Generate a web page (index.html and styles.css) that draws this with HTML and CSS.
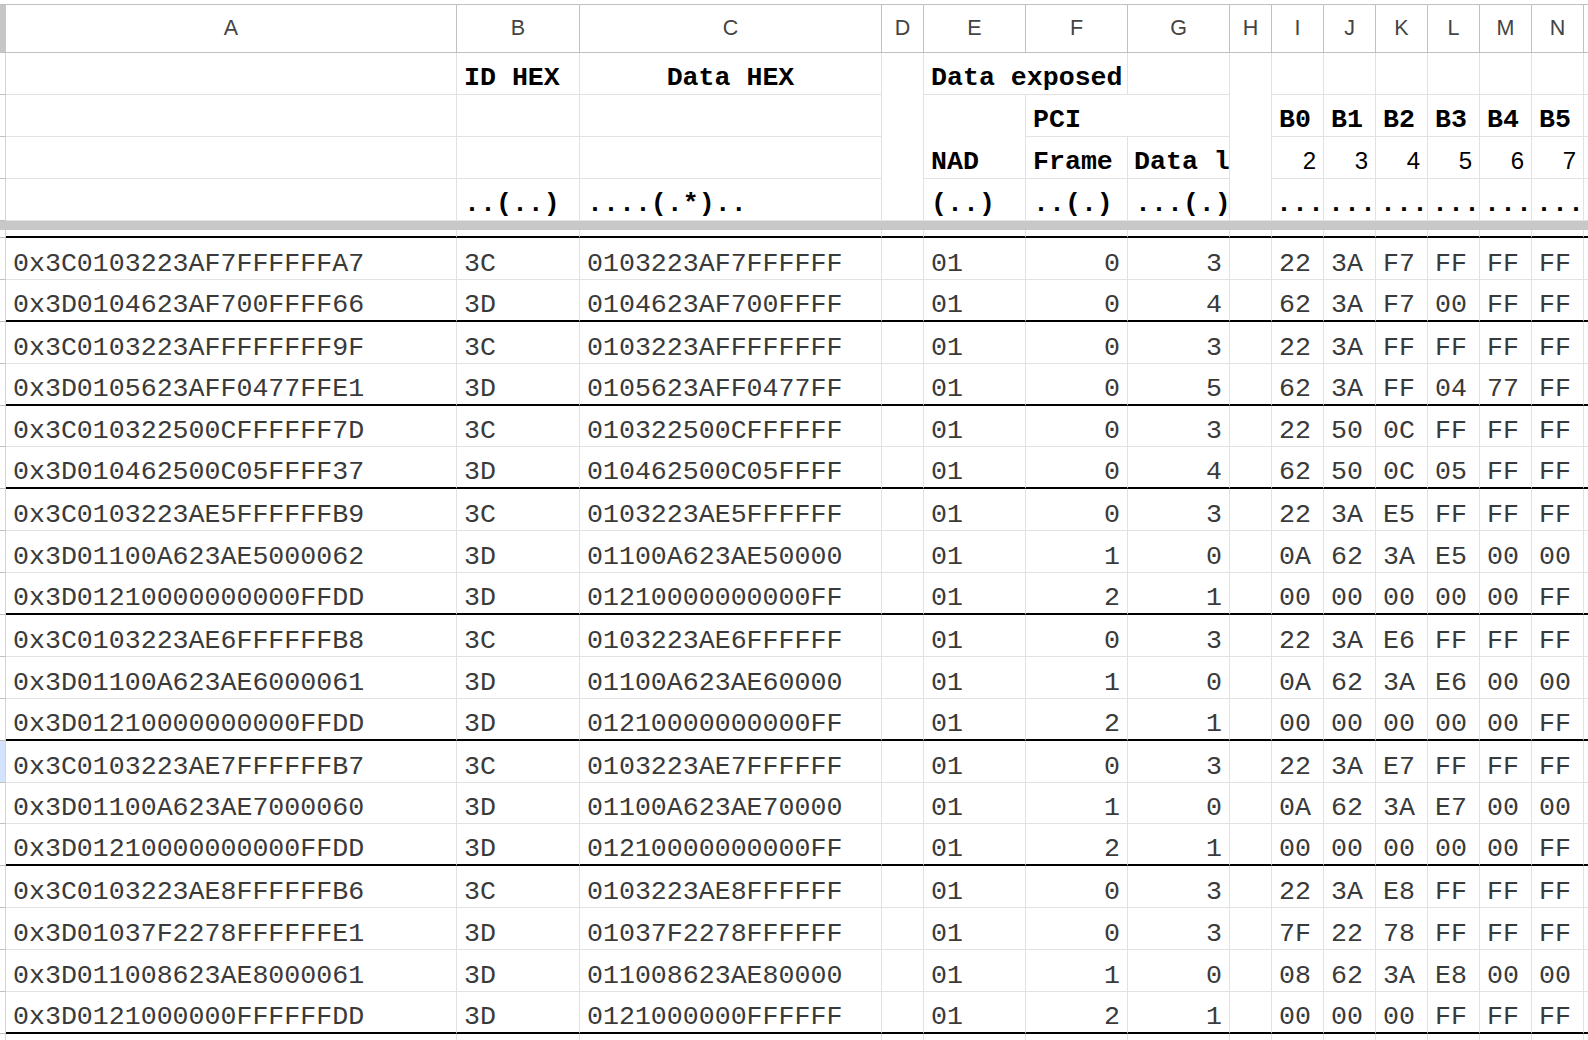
FILE: index.html
```html
<!DOCTYPE html>
<html>
<head>
<meta charset="utf-8">
<link rel="stylesheet" href="styles.css">
</head>
<body>
<div class="sheet">
  <div class="row">
    <div class="corner"></div>
    <div class="ch">A</div><div class="ch">B</div><div class="ch">C</div><div class="ch">D</div>
    <div class="ch">E</div><div class="ch">F</div><div class="ch">G</div><div class="ch">H</div>
    <div class="ch">I</div><div class="ch">J</div><div class="ch">K</div><div class="ch">L</div>
    <div class="ch">M</div><div class="ch">N</div><div class="ch"></div>
  </div>

  <div class="row hd">
    <div class="rh"></div>
    <div class="c"></div>
    <div class="c b">ID HEX</div>
    <div class="c b center">Data HEX</div>
    <div class="c span4"></div>
    <div class="c b span2c">Data exposed</div>
    <div class="c"></div>
    <div class="c span4"></div>
    <div class="c"></div><div class="c"></div><div class="c"></div><div class="c"></div><div class="c"></div><div class="c"></div>
    <div class="c"></div>
  </div>

  <div class="row hd">
    <div class="rh"></div>
    <div class="c"></div>
    <div class="c"></div>
    <div class="c"></div>
    <div class="c b span2r">NAD</div>
    <div class="c b span2c">PCI</div>
    <div class="c b">B0</div><div class="c b">B1</div><div class="c b">B2</div><div class="c b">B3</div><div class="c b">B4</div><div class="c b">B5</div>
    <div class="c"></div>
  </div>

  <div class="row hd">
    <div class="rh"></div>
    <div class="c"></div>
    <div class="c"></div>
    <div class="c"></div>
    <div class="c b">Frame</div>
    <div class="c b clip">Data l</div>
    <div class="c num">2</div><div class="c num">3</div><div class="c num">4</div><div class="c num">5</div><div class="c num">6</div><div class="c num">7</div>
    <div class="c"></div>
  </div>

  <div class="row hd">
    <div class="rh"></div>
    <div class="c"></div>
    <div class="c b">..(..)</div>
    <div class="c b">....(.*)..</div>
    <div class="c b">(..)</div>
    <div class="c b">..(.)</div>
    <div class="c b">...(.)</div>
    <div class="c b dots">...</div><div class="c b dots">...</div><div class="c b dots">...</div><div class="c b dots">...</div><div class="c b dots">...</div><div class="c b dots">...</div>
    <div class="c"></div>
  </div>

  <div class="freeze"></div>

  <div class="row end">
    <div class="rh"></div>
    <div class="c"></div><div class="c"></div><div class="c"></div><div class="c"></div><div class="c"></div>
    <div class="c"></div><div class="c"></div><div class="c"></div><div class="c"></div><div class="c"></div>
    <div class="c"></div><div class="c"></div><div class="c"></div><div class="c"></div><div class="c"></div>
  </div>

  <div class="row"><div class="rh"></div><div class="c">0x3C0103223AF7FFFFFFA7</div><div class="c">3C</div><div class="c">0103223AF7FFFFFF</div><div class="c"></div><div class="c">01</div><div class="c r">0</div><div class="c r">3</div><div class="c"></div><div class="c">22</div><div class="c">3A</div><div class="c">F7</div><div class="c">FF</div><div class="c">FF</div><div class="c">FF</div><div class="c"></div></div>
  <div class="row end"><div class="rh"></div><div class="c">0x3D0104623AF700FFFF66</div><div class="c">3D</div><div class="c">0104623AF700FFFF</div><div class="c"></div><div class="c">01</div><div class="c r">0</div><div class="c r">4</div><div class="c"></div><div class="c">62</div><div class="c">3A</div><div class="c">F7</div><div class="c">00</div><div class="c">FF</div><div class="c">FF</div><div class="c"></div></div>
  <div class="row"><div class="rh"></div><div class="c">0x3C0103223AFFFFFFFF9F</div><div class="c">3C</div><div class="c">0103223AFFFFFFFF</div><div class="c"></div><div class="c">01</div><div class="c r">0</div><div class="c r">3</div><div class="c"></div><div class="c">22</div><div class="c">3A</div><div class="c">FF</div><div class="c">FF</div><div class="c">FF</div><div class="c">FF</div><div class="c"></div></div>
  <div class="row end"><div class="rh"></div><div class="c">0x3D0105623AFF0477FFE1</div><div class="c">3D</div><div class="c">0105623AFF0477FF</div><div class="c"></div><div class="c">01</div><div class="c r">0</div><div class="c r">5</div><div class="c"></div><div class="c">62</div><div class="c">3A</div><div class="c">FF</div><div class="c">04</div><div class="c">77</div><div class="c">FF</div><div class="c"></div></div>
  <div class="row"><div class="rh"></div><div class="c">0x3C010322500CFFFFFF7D</div><div class="c">3C</div><div class="c">010322500CFFFFFF</div><div class="c"></div><div class="c">01</div><div class="c r">0</div><div class="c r">3</div><div class="c"></div><div class="c">22</div><div class="c">50</div><div class="c">0C</div><div class="c">FF</div><div class="c">FF</div><div class="c">FF</div><div class="c"></div></div>
  <div class="row end"><div class="rh"></div><div class="c">0x3D010462500C05FFFF37</div><div class="c">3D</div><div class="c">010462500C05FFFF</div><div class="c"></div><div class="c">01</div><div class="c r">0</div><div class="c r">4</div><div class="c"></div><div class="c">62</div><div class="c">50</div><div class="c">0C</div><div class="c">05</div><div class="c">FF</div><div class="c">FF</div><div class="c"></div></div>
  <div class="row"><div class="rh"></div><div class="c">0x3C0103223AE5FFFFFFB9</div><div class="c">3C</div><div class="c">0103223AE5FFFFFF</div><div class="c"></div><div class="c">01</div><div class="c r">0</div><div class="c r">3</div><div class="c"></div><div class="c">22</div><div class="c">3A</div><div class="c">E5</div><div class="c">FF</div><div class="c">FF</div><div class="c">FF</div><div class="c"></div></div>
  <div class="row"><div class="rh"></div><div class="c">0x3D01100A623AE5000062</div><div class="c">3D</div><div class="c">01100A623AE50000</div><div class="c"></div><div class="c">01</div><div class="c r">1</div><div class="c r">0</div><div class="c"></div><div class="c">0A</div><div class="c">62</div><div class="c">3A</div><div class="c">E5</div><div class="c">00</div><div class="c">00</div><div class="c"></div></div>
  <div class="row end"><div class="rh"></div><div class="c">0x3D01210000000000FFDD</div><div class="c">3D</div><div class="c">01210000000000FF</div><div class="c"></div><div class="c">01</div><div class="c r">2</div><div class="c r">1</div><div class="c"></div><div class="c">00</div><div class="c">00</div><div class="c">00</div><div class="c">00</div><div class="c">00</div><div class="c">FF</div><div class="c"></div></div>
  <div class="row"><div class="rh"></div><div class="c">0x3C0103223AE6FFFFFFB8</div><div class="c">3C</div><div class="c">0103223AE6FFFFFF</div><div class="c"></div><div class="c">01</div><div class="c r">0</div><div class="c r">3</div><div class="c"></div><div class="c">22</div><div class="c">3A</div><div class="c">E6</div><div class="c">FF</div><div class="c">FF</div><div class="c">FF</div><div class="c"></div></div>
  <div class="row"><div class="rh"></div><div class="c">0x3D01100A623AE6000061</div><div class="c">3D</div><div class="c">01100A623AE60000</div><div class="c"></div><div class="c">01</div><div class="c r">1</div><div class="c r">0</div><div class="c"></div><div class="c">0A</div><div class="c">62</div><div class="c">3A</div><div class="c">E6</div><div class="c">00</div><div class="c">00</div><div class="c"></div></div>
  <div class="row end"><div class="rh"></div><div class="c">0x3D01210000000000FFDD</div><div class="c">3D</div><div class="c">01210000000000FF</div><div class="c"></div><div class="c">01</div><div class="c r">2</div><div class="c r">1</div><div class="c"></div><div class="c">00</div><div class="c">00</div><div class="c">00</div><div class="c">00</div><div class="c">00</div><div class="c">FF</div><div class="c"></div></div>
  <div class="row"><div class="rh sel"></div><div class="c">0x3C0103223AE7FFFFFFB7</div><div class="c">3C</div><div class="c">0103223AE7FFFFFF</div><div class="c"></div><div class="c">01</div><div class="c r">0</div><div class="c r">3</div><div class="c"></div><div class="c">22</div><div class="c">3A</div><div class="c">E7</div><div class="c">FF</div><div class="c">FF</div><div class="c">FF</div><div class="c"></div></div>
  <div class="row"><div class="rh"></div><div class="c">0x3D01100A623AE7000060</div><div class="c">3D</div><div class="c">01100A623AE70000</div><div class="c"></div><div class="c">01</div><div class="c r">1</div><div class="c r">0</div><div class="c"></div><div class="c">0A</div><div class="c">62</div><div class="c">3A</div><div class="c">E7</div><div class="c">00</div><div class="c">00</div><div class="c"></div></div>
  <div class="row end"><div class="rh"></div><div class="c">0x3D01210000000000FFDD</div><div class="c">3D</div><div class="c">01210000000000FF</div><div class="c"></div><div class="c">01</div><div class="c r">2</div><div class="c r">1</div><div class="c"></div><div class="c">00</div><div class="c">00</div><div class="c">00</div><div class="c">00</div><div class="c">00</div><div class="c">FF</div><div class="c"></div></div>
  <div class="row"><div class="rh"></div><div class="c">0x3C0103223AE8FFFFFFB6</div><div class="c">3C</div><div class="c">0103223AE8FFFFFF</div><div class="c"></div><div class="c">01</div><div class="c r">0</div><div class="c r">3</div><div class="c"></div><div class="c">22</div><div class="c">3A</div><div class="c">E8</div><div class="c">FF</div><div class="c">FF</div><div class="c">FF</div><div class="c"></div></div>
  <div class="row"><div class="rh"></div><div class="c">0x3D01037F2278FFFFFFE1</div><div class="c">3D</div><div class="c">01037F2278FFFFFF</div><div class="c"></div><div class="c">01</div><div class="c r">0</div><div class="c r">3</div><div class="c"></div><div class="c">7F</div><div class="c">22</div><div class="c">78</div><div class="c">FF</div><div class="c">FF</div><div class="c">FF</div><div class="c"></div></div>
  <div class="row"><div class="rh"></div><div class="c">0x3D011008623AE8000061</div><div class="c">3D</div><div class="c">011008623AE80000</div><div class="c"></div><div class="c">01</div><div class="c r">1</div><div class="c r">0</div><div class="c"></div><div class="c">08</div><div class="c">62</div><div class="c">3A</div><div class="c">E8</div><div class="c">00</div><div class="c">00</div><div class="c"></div></div>
  <div class="row end"><div class="rh"></div><div class="c">0x3D0121000000FFFFFFDD</div><div class="c">3D</div><div class="c">0121000000FFFFFF</div><div class="c"></div><div class="c">01</div><div class="c r">2</div><div class="c r">1</div><div class="c"></div><div class="c">00</div><div class="c">00</div><div class="c">00</div><div class="c">FF</div><div class="c">FF</div><div class="c">FF</div><div class="c"></div></div>

  <div class="row">
    <div class="rh"></div>
    <div class="c"></div><div class="c"></div><div class="c"></div><div class="c"></div><div class="c"></div>
    <div class="c"></div><div class="c"></div><div class="c"></div><div class="c"></div><div class="c"></div>
    <div class="c"></div><div class="c"></div><div class="c"></div><div class="c"></div><div class="c"></div>
  </div>
</div>
</body>
</html>
```

FILE: styles.css
```css
html, body {
  margin: 0;
  padding: 0;
  background: #ffffff;
  overflow: hidden;
}

.sheet {
  display: grid;
  grid-template-columns: 6px 451px 123px 302px 42px 102px 102px 102px 42px repeat(6, 52px) 12px;
  grid-template-rows: 49px repeat(4, 42px) 9px 8px;
  grid-auto-rows: 41.9px;
  padding-top: 4px;
  width: 1600px;
  font-family: "Liberation Mono", "Courier New", monospace;
  font-size: 26.6px;
  color: #3a3a3a;
}

.row {
  display: contents;
}

.corner {
  background: #c6c6c6;
  border-top: 1px solid #c0c0c0;
  border-bottom: 1px solid #c0c0c0;
}

.ch {
  box-sizing: border-box;
  border-top: 1px solid #c0c0c0;
  border-right: 1px solid #c0c0c0;
  border-bottom: 1px solid #c0c0c0;
  display: flex;
  align-items: center;
  justify-content: center;
  font-family: "Liberation Sans", Arial, sans-serif;
  font-size: 21.5px;
  color: #444444;
  overflow: hidden;
}

.rh {
  box-sizing: border-box;
  border-right: 1px solid #d4d4d4;
  border-bottom: 1px solid #c0c0c0;
  background: #ffffff;
}

.rh.sel {
  background: #d3e3fd;
}

.c {
  box-sizing: border-box;
  border-right: 1px solid #e2e2e2;
  border-bottom: 1px solid #e2e2e2;
  display: flex;
  align-items: flex-end;
  padding: 0 7px 0 7px;
  white-space: nowrap;
  overflow: hidden;
  min-width: 0;
}

.hd .c {
  color: #000000;
  padding-bottom: 1px;
}

.b {
  font-weight: bold;
  color: #000000;
}

.center {
  justify-content: center;
}

.r {
  justify-content: flex-end;
}

.hd .num {
  justify-content: flex-end;
  font-family: "Liberation Sans", Arial, sans-serif;
  font-size: 24px;
  color: #000000;
  padding-bottom: 3px;
}

.hd .clip {
  padding-left: 6px;
  padding-right: 0;
}

.hd .dots {
  padding-left: 4px;
  padding-right: 0;
}

.span4 {
  grid-row: span 4;
}

.span2c {
  grid-column: span 2;
}

.span2r {
  grid-row: span 2;
}

.freeze {
  grid-column: 1 / -1;
  background: #c8c8c8;
}

.end .c {
  border-bottom: 2px solid #000000;
}
```
